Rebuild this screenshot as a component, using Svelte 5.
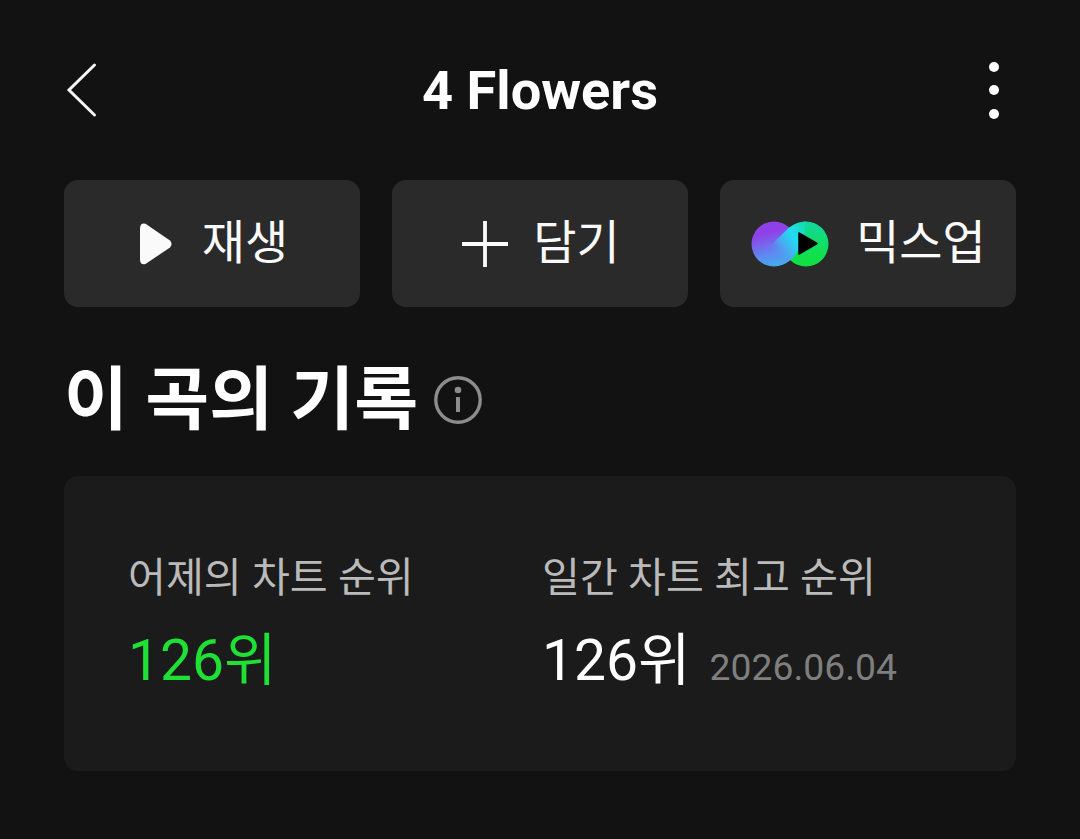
<script>
  const stats = [
    { label: '어제의 차트 순위', value: '126위', accent: true },
    { label: '일간 차트 최고 순위', value: '126위', date: '2026.06.04' }
  ];
</script>

<div class="page">
  <header class="top">
    <svg class="back" width="32" height="56" viewBox="0 0 32 56"><path d="M28.5 3 L3 28 L28.5 53" fill="none" stroke="#f5f5f5" stroke-width="3" stroke-linecap="round" stroke-linejoin="miter"/></svg>
    <h1>4 Flowers</h1>
    <svg class="more" width="10" height="60" viewBox="0 0 10 60"><circle cx="5" cy="7" r="5" fill="#fff"/><circle cx="5" cy="30" r="5" fill="#fff"/><circle cx="5" cy="54" r="5" fill="#fff"/></svg>
  </header>

  <div class="actions">
    <button class="play">
      <svg width="32" height="42" viewBox="0 0 32 42"><path d="M5.5 0.8 L30 17.5 Q33 21 30 24.5 L5.5 41 Q0.5 42.5 0 37 V5 Q0.5 -0.5 5.5 0.8Z" fill="#fafafa"/></svg>
      <span>재생</span>
    </button>
    <button class="add">
      <svg width="46" height="46" viewBox="0 0 46 46"><path d="M0 23H46M23 0V46" stroke="#fafafa" stroke-width="3.8"/></svg>
      <span>담기</span>
    </button>
    <button class="mix">
      <svg width="78" height="46" viewBox="0 0 78 46">
        <defs>
          <linearGradient id="g1" x1="0.35" y1="0.1" x2="0.6" y2="1"><stop offset="0.15" stop-color="#9040e8"/><stop offset="0.65" stop-color="#5f88f0"/><stop offset="1" stop-color="#40b0f0"/></linearGradient>
          <linearGradient id="g2" x1="0.5" y1="0" x2="0.5" y2="1"><stop offset="0" stop-color="#10d8a0"/><stop offset="0.7" stop-color="#10e050"/><stop offset="1" stop-color="#10e040"/></linearGradient>
          <linearGradient id="g3" gradientUnits="userSpaceOnUse" x1="20" y1="30" x2="56" y2="6"><stop offset="0" stop-color="#5a90ee" stop-opacity="0"/><stop offset="0.3" stop-color="#4aa8f0"/><stop offset="0.62" stop-color="#22dcf4"/><stop offset="1" stop-color="#12dcb0"/></linearGradient>
        </defs>
        <circle cx="55" cy="23" r="22.5" fill="url(#g2)"/>
        <circle cx="23" cy="23" r="22.5" fill="url(#g1)"/>
        <path d="M38 6.5 L14 30 L26 45 Q36 43 42 37 L52 22 L55 0.5 Q46 0.5 38 6.5Z" fill="url(#g3)"/>
        <path d="M48 12 L66 22.5 L48 33Z" fill="#000" stroke="#000" stroke-width="1.5" stroke-linejoin="round"/>
      </svg>
      <span>믹스업</span>
    </button>
  </div>

  <div class="heading">
    <h2>이 곡의 기록</h2>
    <svg width="48" height="48" viewBox="0 0 48 48"><circle cx="24" cy="24" r="22.2" fill="none" stroke="#8c8c8c" stroke-width="3.4"/><circle cx="24" cy="14" r="3.3" fill="#8c8c8c"/><path d="M24 21V36" stroke="#8c8c8c" stroke-width="4"/></svg>
  </div>

  <section class="card">
    {#each stats as s}
      <div class="stat">
        <div class="label">{s.label}</div>
        <div class="row">
          <span class="value" class:accent={s.accent}>{s.value}</span>
          {#if s.date}<span class="date">{s.date}</span>{/if}
        </div>
      </div>
    {/each}
  </section>
</div>

<style>
  :global(body) { margin: 0; background: #121212; }
  .page { height: 839px; box-sizing: border-box; padding: 0 64px; background: #121212; color: #fff; font-family: Roboto, "Noto Sans CJK KR", sans-serif; overflow: hidden; }
  .top { height: 180px; display: flex; align-items: center; justify-content: space-between; position: relative; padding: 0 17px 0 2px; box-sizing: border-box; }
  .top h1 { position: absolute; left: 0; right: 0; text-align: center; margin: 0; font-size: 54.2px; font-weight: 700; top: 61px; line-height: 59px; }
  .actions { display: grid; grid-template-columns: repeat(3, 296px); gap: 32px; }
  button { height: 127px; background: #2a2a2a; border: 0; border-radius: 14px; color: #fafafa; font: inherit; font-size: 47px; line-height: 1; display: flex; align-items: center; justify-content: center; padding: 0; }
  button span { margin-bottom: 2px; }
  .play { gap: 30px; padding-left: 4px; }
  .add { gap: 25px; padding-left: 2px; }
  .mix { gap: 27px; padding-left: 1px; }
  .heading { display: flex; align-items: center; gap: 16px; margin-top: 53px; height: 80px; }
  h2 { margin: 2px 0 0; font-size: 69.5px; font-weight: 700; line-height: 80px; }
  .card { margin-top: 36px; height: 295px; background: #1b1b1b; border-radius: 14px; display: grid; grid-template-columns: 414px 1fr; padding: 75px 0 0 64px; box-sizing: border-box; }
  .label { font-size: 41.2px; color: #bababa; line-height: 54px; }
  .row { margin-top: 23px; display: flex; align-items: baseline; gap: 19px; }
  .value { font-size: 57px; line-height: 66px; }
  .accent { color: #1fe034; }
  .date { font-size: 37.3px; color: #7f7f7f; }
</style>
